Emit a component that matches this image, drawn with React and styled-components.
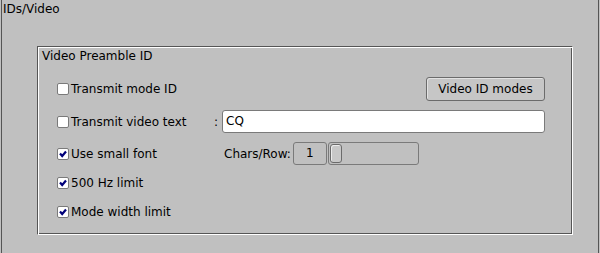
import React from "react";
import styled, { createGlobalStyle } from "styled-components";

const GlobalStyle = createGlobalStyle`
  html, body {
    margin: 0;
    padding: 0;
    background: #c0c0c0;
  }
  body {
    font-family: "DejaVu Sans", "Liberation Sans", sans-serif;
    font-size: 12px;
    color: #000;
  }
`;

const Screen = styled.div`
  width: 600px;
  height: 253px;
  padding: 0 1px;
  box-sizing: border-box;
  overflow: hidden;
`;

const OuterFrame = styled.div`
  height: 100%;
  border-left: 1px solid #555;
  border-right: 1px solid #555;
  box-sizing: border-box;
`;

const Title = styled.div`
  padding: 2px 0 0 1px;
  line-height: 15px;
  height: 46px;
  box-sizing: border-box;
`;

const Group = styled.div`
  margin-left: 35px;
  width: 536px;
  height: 189px;
  box-sizing: border-box;
  border: 1px solid;
  border-color: #555 #fff #fff #555;
  box-shadow: inset 1px 1px 0 #fff, inset -1px -1px 0 #555;
  padding: 1px;
`;

const GroupLabel = styled.div`
  padding: 0 0 0 3px;
  line-height: 16px;
  height: 29px;
`;

const Rows = styled.div`
  display: flex;
  flex-direction: column;
  padding: 0 26px 0 18px;
`;

const Row = styled.div`
  display: grid;
  grid-template-columns: 157px 1fr;
  align-items: center;
  height: ${({ $h }) => $h}px;
  margin-top: ${({ $gap }) => $gap || 0}px;
`;

const Check = styled.label`
  display: flex;
  align-items: center;
  white-space: nowrap;
`;

const Box = styled.span`
  width: 12px;
  height: 12px;
  box-sizing: border-box;
  border: 1px solid #7a7a7a;
  border-radius: 2px;
  background: #fff;
  margin-right: 2px;
  display: flex;
  align-items: center;
  justify-content: center;
`;

const Side = styled.div`
  display: flex;
  align-items: center;
  justify-content: ${({ $end }) => ($end ? "flex-end" : "flex-start")};
  padding-left: ${({ $pad }) => $pad || 0}px;
`;

const Button = styled.button`
  all: unset;
  box-sizing: border-box;
  width: 119px;
  height: 24px;
  border: 1px solid #6b6b6b;
  border-radius: 3px;
  background: #c6c6c6;
  box-shadow: inset 1px 1px 0 #e2e2e2;
  font: inherit;
  text-align: center;
  line-height: 22px;
`;

const Colon = styled.span`
  width: 8px;
  text-align: left;
`;

const TextInput = styled.div`
  flex: 1;
  height: 23px;
  box-sizing: border-box;
  background: #fff;
  border: 1px solid #7a7a7a;
  border-radius: 3px;
  padding-left: 3px;
  line-height: 21px;
`;

const FieldLabel = styled.span`
  margin-right: 2px;
`;

const ValueBox = styled.div`
  width: 34px;
  height: 23px;
  box-sizing: border-box;
  border: 1px solid #7a7a7a;
  border-radius: 3px;
  text-align: center;
  line-height: 21px;
`;

const SliderTrack = styled.div`
  width: 91px;
  height: 23px;
  margin-left: 1px;
  box-sizing: border-box;
  border: 1px solid #7a7a7a;
  border-radius: 3px;
  padding: 1px;
  display: flex;
`;

const Thumb = styled.div`
  width: 12px;
  height: 100%;
  box-sizing: border-box;
  border: 1px solid #6b6b6b;
  border-radius: 3px;
  background: #c8c8c8;
  box-shadow: inset 1px 1px 0 #ececec;
`;

const CheckMark = () => (
  <svg width="8" height="8" viewBox="0 0 8 8">
    <path d="M1 3.5 L3.2 6 L7 1.5" fill="none" stroke="#00007a" strokeWidth="2.2" />
  </svg>
);

const CheckItem = ({ checked, children }) => (
  <Check>
    <Box>{checked && <CheckMark />}</Box>
    {children}
  </Check>
);

export default function App() {
  return (
    <>
      <GlobalStyle />
      <Screen>
        <OuterFrame>
          <Title>IDs/Video</Title>
          <Group>
            <GroupLabel>Video Preamble ID</GroupLabel>
            <Rows>
              <Row $h={24}>
                <CheckItem>Transmit mode ID</CheckItem>
                <Side $end>
                  <Button type="button">Video ID modes</Button>
                </Side>
              </Row>
              <Row $h={23} $gap={9}>
                <CheckItem>Transmit video text</CheckItem>
                <Side>
                  <Colon>:</Colon>
                  <TextInput>CQ</TextInput>
                </Side>
              </Row>
              <Row $h={23} $gap={9}>
                <CheckItem checked>Use small font</CheckItem>
                <Side $pad={10}>
                  <FieldLabel>Chars/Row:</FieldLabel>
                  <ValueBox>1</ValueBox>
                  <SliderTrack>
                    <Thumb />
                  </SliderTrack>
                </Side>
              </Row>
              <Row $h={23} $gap={6}>
                <CheckItem checked>500 Hz limit</CheckItem>
              </Row>
              <Row $h={23} $gap={6}>
                <CheckItem checked>Mode width limit</CheckItem>
              </Row>
            </Rows>
          </Group>
        </OuterFrame>
      </Screen>
    </>
  );
}
